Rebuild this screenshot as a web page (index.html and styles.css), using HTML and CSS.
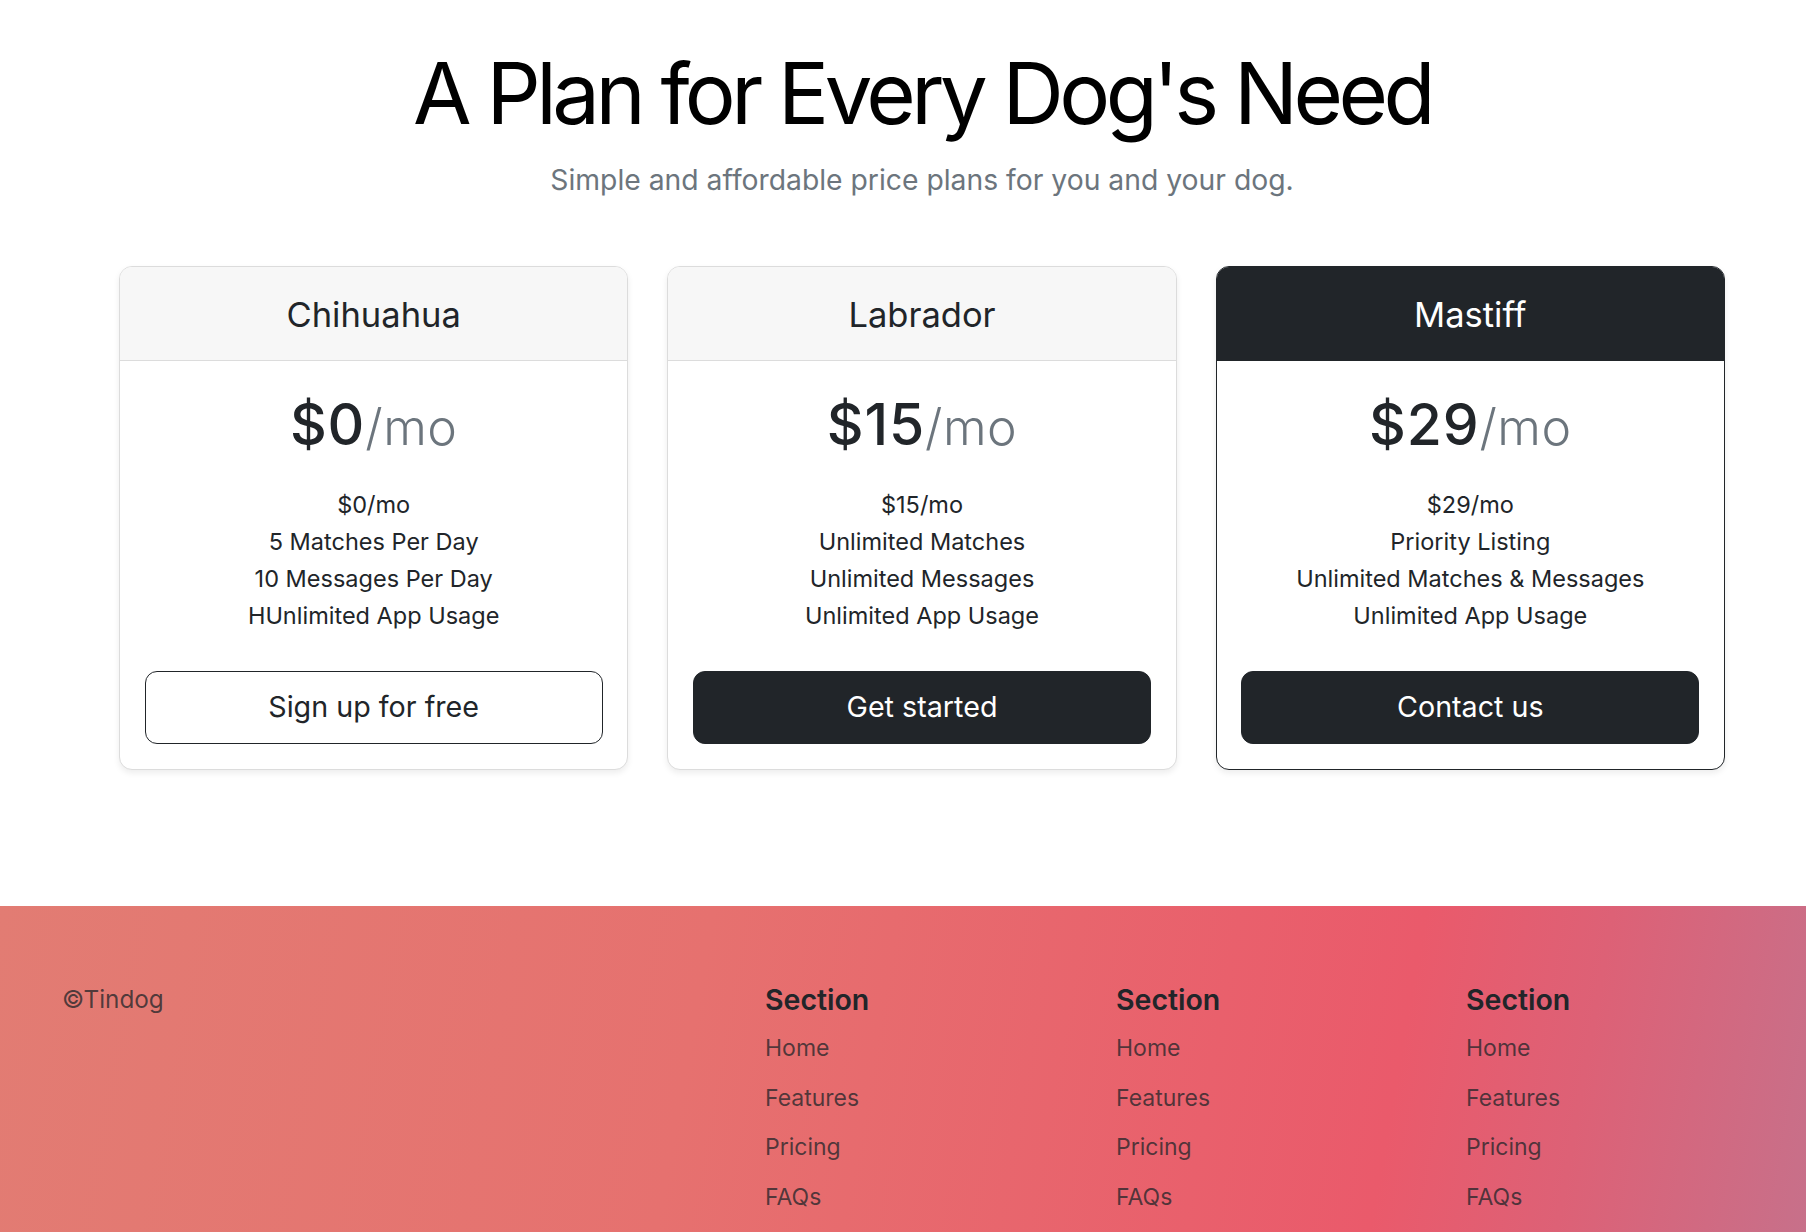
FILE: index.html
```html
<!DOCTYPE html>
<html lang="en">
<head>
<meta charset="utf-8">
<title>Tindog – Pricing</title>
<link rel="stylesheet" href="styles.css">
</head>
<body>
<section class="pricing">
  <div class="pricing-head">
    <h1 class="title">A Plan for Every Dog's Need</h1>
    <p class="lead">Simple and affordable price plans for you and your dog.</p>
  </div>
  <div class="plans">
    <div class="card">
      <div class="card-header"><h4 class="plan-name">Chihuahua</h4></div>
      <div class="card-body">
        <h2 class="price">$0<small>/mo</small></h2>
        <ul class="features">
          <li>$0/mo</li>
          <li>5 Matches Per Day</li>
          <li>10 Messages Per Day</li>
          <li>HUnlimited App Usage</li>
        </ul>
        <button class="btn btn-outline">Sign up for free</button>
      </div>
    </div>
    <div class="card">
      <div class="card-header"><h4 class="plan-name">Labrador</h4></div>
      <div class="card-body">
        <h2 class="price">$15<small>/mo</small></h2>
        <ul class="features">
          <li>$15/mo</li>
          <li>Unlimited Matches</li>
          <li>Unlimited Messages</li>
          <li>Unlimited App Usage</li>
        </ul>
        <button class="btn btn-dark">Get started</button>
      </div>
    </div>
    <div class="card card-dark">
      <div class="card-header"><h4 class="plan-name">Mastiff</h4></div>
      <div class="card-body">
        <h2 class="price">$29<small>/mo</small></h2>
        <ul class="features">
          <li>$29/mo</li>
          <li>Priority Listing</li>
          <li>Unlimited Matches &amp; Messages</li>
          <li>Unlimited App Usage</li>
        </ul>
        <button class="btn btn-dark">Contact us</button>
      </div>
    </div>
  </div>
</section>
<footer class="footer">
  <div class="footer-row">
    <div class="copy">©Tindog</div>
    <div class="footer-col">
      <h5>Section</h5>
      <ul>
        <li><a href="#">Home</a></li>
        <li><a href="#">Features</a></li>
        <li><a href="#">Pricing</a></li>
        <li><a href="#">FAQs</a></li>
      </ul>
    </div>
    <div class="footer-col">
      <h5>Section</h5>
      <ul>
        <li><a href="#">Home</a></li>
        <li><a href="#">Features</a></li>
        <li><a href="#">Pricing</a></li>
        <li><a href="#">FAQs</a></li>
      </ul>
    </div>
    <div class="footer-col">
      <h5>Section</h5>
      <ul>
        <li><a href="#">Home</a></li>
        <li><a href="#">Features</a></li>
        <li><a href="#">Pricing</a></li>
        <li><a href="#">FAQs</a></li>
      </ul>
    </div>
  </div>
</footer>
</body>
</html>
```

FILE: styles.css
```css
* { box-sizing: border-box; }

html, body {
  margin: 0;
  padding: 0;
}

body {
  font-family: Inter, "Liberation Sans", sans-serif;
  color: #212529;
  background: #fff;
}

.pricing {
  padding: 43px 81px 136px 119px;
  text-align: center;
}

.title {
  margin: 0;
  font-size: 85px;
  line-height: 102px;
  font-weight: 400;
  letter-spacing: -0.0535em;
  color: #000;
}

.lead {
  margin: 15px 0 0;
  font-size: 28.3px;
  line-height: 41px;
  color: #6c757d;
}

.plans {
  margin-top: 65px;
  display: grid;
  grid-template-columns: repeat(3, 1fr);
  column-gap: 39px;
}

.card {
  display: flex;
  flex-direction: column;
  background: #fff;
  border: 1px solid #dcdcdc;
  border-radius: 13px;
  overflow: hidden;
  box-shadow: 0 3px 6px rgba(0, 0, 0, 0.075);
}

.card-header {
  height: 94px;
  padding-top: 2px;
  display: flex;
  align-items: center;
  justify-content: center;
  background: #f7f7f7;
  border-bottom: 1px solid #dcdcdc;
}

.plan-name {
  margin: 0;
  font-size: 34.5px;
  line-height: 41.4px;
  font-weight: 400;
}

.card-dark {
  border-color: #212529;
}

.card-dark .card-header {
  background: #212529;
  border-bottom-color: #212529;
  color: #fff;
}

.card-body {
  padding: 30.5px 24.6px 25.2px;
  display: flex;
  flex-direction: column;
}

.price {
  margin: 0;
  font-size: 57px;
  line-height: 66px;
  font-weight: 500;
  letter-spacing: 0.015em;
}

.price small {
  font-size: 50px;
  font-weight: 300;
  letter-spacing: 0.01em;
  color: #6c757d;
}

.features {
  list-style: none;
  padding: 0;
  margin: 27.7px 0 0;
  font-size: 23.5px;
  line-height: 36.9px;
}

.btn {
  margin-top: 35.7px;
  width: 100%;
  height: 73px;
  border-radius: 12px;
  border: 1px solid #212529;
  font-family: inherit;
  font-size: 28.7px;
  line-height: 1.5;
  cursor: pointer;
}

.btn-outline {
  background: #fff;
  color: #212529;
}

.btn-dark {
  background: #212529;
  color: #fff;
}

.footer {
  padding: 77.5px 0 80px 62px;
  background: linear-gradient(100deg, #e27c73 0%, #e6716f 38%, #ea5a6b 76%, #dd6176 86%, #c6718b 100%);
}

.footer-row {
  display: grid;
  grid-template-columns: 703px 351px 350px 1fr;
}

.copy {
  font-size: 24.3px;
  line-height: 33px;
  color: rgba(33, 37, 41, 0.75);
}

.footer-col h5 {
  margin: 0 0 14px;
  font-size: 28.5px;
  line-height: 33px;
  font-weight: 600;
  color: #212529;
}

.footer-col ul {
  list-style: none;
  margin: 0;
  padding: 0;
}

.footer-col li {
  font-size: 23px;
  line-height: 36px;
  margin-bottom: 13.5px;
}

.footer-col a {
  color: rgba(33, 37, 41, 0.75);
  text-decoration: none;
}
```
